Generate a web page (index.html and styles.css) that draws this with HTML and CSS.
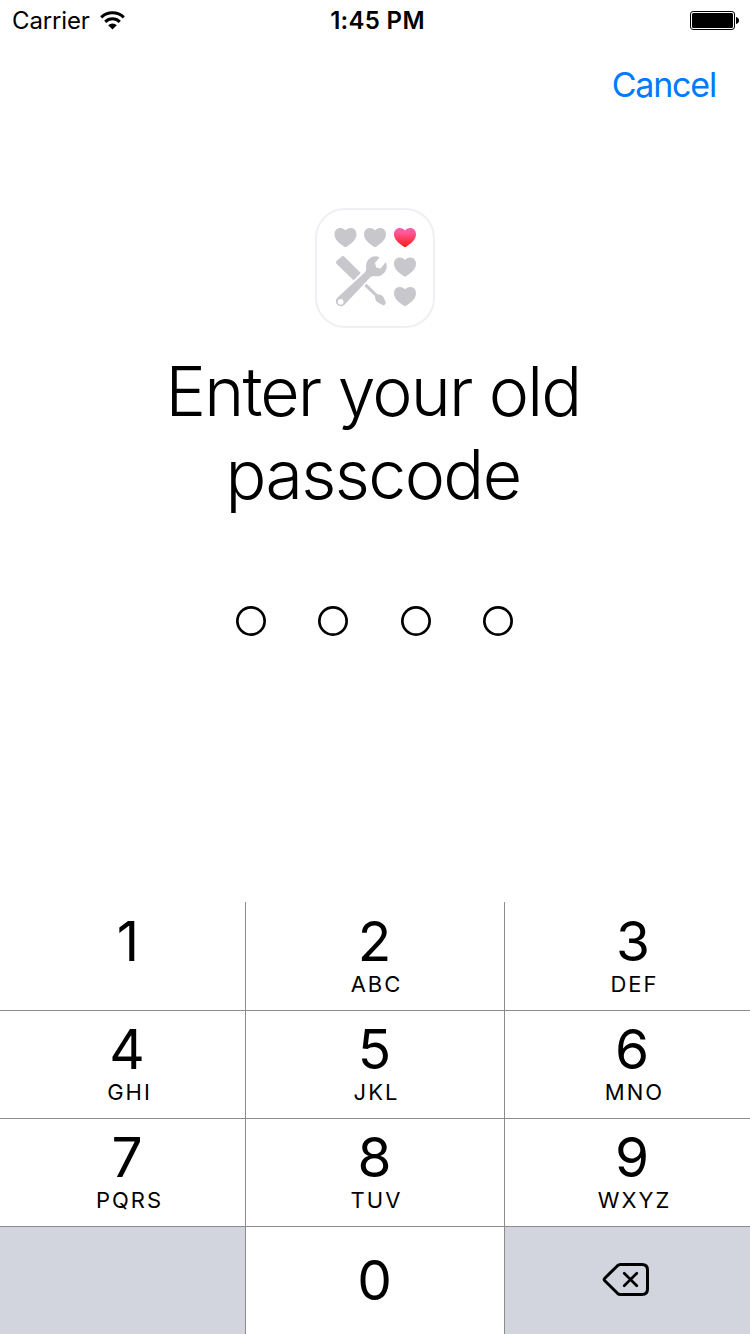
FILE: index.html
```html
<!DOCTYPE html>
<html lang="en">
<head>
<meta charset="utf-8">
<title>Passcode</title>
<link rel="stylesheet" href="styles.css">
</head>
<body>
<div class="screen">
  <header class="status">
    <div class="status-left">
      <span class="carrier">Carrier</span>
      <svg class="wifi" width="26" height="20" viewBox="0 0 26 20">
        <path d="M1.2 6.3A16.3 16.3 0 0 1 23.800 6.300" fill="none" stroke="#000" stroke-width="3"/>
        <path d="M5.200 10.800A10.500 10.500 0 0 1 19.800 10.800" fill="none" stroke="#000" stroke-width="3"/>
        <path d="M8.200 14.300A5.900 5.900 0 0 1 16.800 14.300L12.500 18.500Z"/>
      </svg>
    </div>
    <span class="time">1:45 PM</span>
    <svg class="battery" width="50" height="20" viewBox="0 0 50 20">
      <rect x=".5" y=".5" width="44" height="18" rx="2.600" fill="none" stroke="#000" stroke-width="1"/>
      <rect x="2" y="2" width="41" height="15" rx="1.500"/>
      <path d="M46 6Q49 6.600 49 9.500T46 13Z"/>
    </svg>
  </header>
  <nav class="nav"><span class="cancel">Cancel</span></nav>
  <main class="prompt">
    <svg class="app-icon" width="120" height="120" viewBox="0 0 120 120">
      <defs>
        <linearGradient id="g" x1="0" y1="0" x2="0" y2="1"><stop offset="0" stop-color="#ff5eb0"/><stop offset=".25" stop-color="#ff5797"/><stop offset="1" stop-color="#ff1a14"/></linearGradient>
        <path id="heart" d="M11 19Q10.400 19 9.500 18.400C5 15.700 0 11.500 0 6.300C0 2.500 2.400 0 5.800 0C8.200 0 9.900 .9 11 2.500C12.100 .9 13.800 0 16.200 0C19.600 0 22 2.500 22 6.300C22 11.500 17 15.700 12.500 18.400Q11.600 19 11 19Z"/>
      </defs>
      <rect x="1" y="1" width="118" height="118" rx="29" fill="#fff" stroke="#efeff4" stroke-width="2"/>
      <g fill="#c7c7cc">
        <use href="#heart" x="19.500" y="20"/>
        <use href="#heart" x="49" y="20"/>
        <use href="#heart" x="79" y="20" fill="url(#g)"/>
        <use href="#heart" x="79" y="49.500"/>
        <use href="#heart" x="79" y="79"/>
        <path d="M21.500 53L26.700 48.500Q28.200 47.500 29.500 48.700L45.700 65L38.500 72.300L21.700 56Q20.200 54.400 21.500 53Z"/>
        <path d="M51.700 75.700L62.300 86.300Q66.500 86.300 68.300 89L71 94.700L69 97.700L63 94.500Q60 92.800 60 88L49.300 78Z"/>
        <path fill-rule="evenodd" d="M64.700 49.300L60 54.700L61.200 59.500L65.700 60.600L70.500 54.200Q72 55.500 71.700 58.700C71.200 65 65.500 69.700 58.500 68L55.500 69L29.700 96.500C24.500 101.500 18 95 22.300 89.700L49.500 64.700Q51.500 62.800 51.200 60C50 52.500 57 45.700 64.700 49.300ZM25.700 90.900A2.900 2.900 0 1 0 25.700 96.700A2.900 2.900 0 1 0 25.700 90.900Z"/>
      </g>
    </svg>
    <h1 class="title"><span class="line-one">Enter your old</span><br><span class="line-two">passcode</span></h1>
    <div class="dots"><i class="dot"></i><i class="dot"></i><i class="dot"></i><i class="dot"></i></div>
  </main>
  <section class="keypad">
    <div class="key"><span class="digit one">1</span></div>
    <div class="key mid"><span class="digit">2</span><span class="letters">ABC</span></div>
    <div class="key"><span class="digit three">3</span><span class="letters">DEF</span></div>
    <div class="key"><span class="digit">4</span><span class="letters">GHI</span></div>
    <div class="key mid"><span class="digit">5</span><span class="letters">JKL</span></div>
    <div class="key"><span class="digit">6</span><span class="letters">MNO</span></div>
    <div class="key"><span class="digit">7</span><span class="letters">PQRS</span></div>
    <div class="key mid"><span class="digit">8</span><span class="letters">TUV</span></div>
    <div class="key"><span class="digit">9</span><span class="letters">WXYZ</span></div>
    <div class="key blank"></div>
    <div class="key mid zero"><span class="digit">0</span></div>
    <div class="key blank">
      <svg width="48" height="36" viewBox="0 0 48 36" fill="none" stroke="#000" stroke-width="3" stroke-linecap="round" stroke-linejoin="round">
        <path d="M18.500 2.500H40Q45.500 2.500 45.500 8V27Q45.500 32.500 40 32.500H18.500Q16.800 32.500 15.500 31.300L2.800 18.800Q1.600 17.500 2.800 16.200L15.500 3.700Q16.800 2.500 18.500 2.500Z"/>
        <path stroke-width="2.700" d="M22.200 11.200L34.800 23.800M34.800 11.200L22.200 23.800"/>
      </svg>
    </div>
  </section>
</div>
</body>
</html>
```
FILE: styles.css
```css
body { margin: 0; background: #fff; }
.screen {
  width: 750px;
  height: 1334px;
  display: flex;
  flex-direction: column;
  overflow: hidden;
  color: #000;
  font-family: Inter, "Liberation Sans", sans-serif;
}
.status {
  height: 42px;
  display: grid;
  grid-template-columns: 1fr auto 1fr;
  align-items: center;
  padding: 0 10px 0 12px;
  box-sizing: border-box;
  line-height: 42px;
}
.status-left { display: flex; align-items: center; gap: 10px; }
.carrier { font-size: 24px; letter-spacing: -0.15px; }
.time { font-size: 24px; font-weight: 600; letter-spacing: 0.3px; padding-left: 3px; }
.battery { justify-self: end; }
.nav {
  height: 84px;
  display: flex;
  justify-content: flex-end;
  align-items: center;
  padding-right: 34px;
}
.cancel { font-size: 34px; color: #007aff; letter-spacing: -1.2px; }
.prompt {
  flex: 1;
  display: flex;
  flex-direction: column;
  align-items: center;
  padding-top: 82px;
}
.app-icon { display: block; }
.title {
  margin: 22px 0 0;
  padding-right: 4px;
  font-size: 68px;
  font-weight: 340;
  line-height: 83px;
  text-align: center;
}
.line-one { letter-spacing: -1.85px; }
.line-two { letter-spacing: -1.6px; }
.dots { display: flex; gap: 52.300px; margin: 90.300px 1px 0 0; }
.dot {
  width: 30px;
  height: 30px;
  box-shadow: inset 0 0 0 2.700px #000;
  border-radius: 50%;
}
.keypad {
  height: 432px;
  display: grid;
  grid-template-columns: 245px 260px 245px;
  grid-template-rows: repeat(4, 108px);
}
.key {
  box-sizing: border-box;
  display: flex;
  flex-direction: column;
  align-items: center;
  padding: 10px 0 0 9px;
}
.key:nth-child(n+4) {
  border-top: 1px solid #8c8c8c;
  padding-top: 9px;
}
.mid {
  border-left: 1px solid #8c8c8c;
  border-right: 1px solid #8c8c8c;
  padding-left: 0;
}
.digit { font-size: 55px; line-height: 59px; }
.one { padding-left: 2px; }
.three { padding-left: 2px; }
.mid .digit { padding-right: 1px; }
.letters {
  font-size: 22px;
  line-height: 26px;
  letter-spacing: 2px;
  padding-left: 5px;
}
.mid .letters { padding-left: 3px; }
.key.zero { padding-top: 24px; }
.key.blank {
  background: #d2d5dd;
  justify-content: center;
  padding: 0 3px 1px 0;
}
```
